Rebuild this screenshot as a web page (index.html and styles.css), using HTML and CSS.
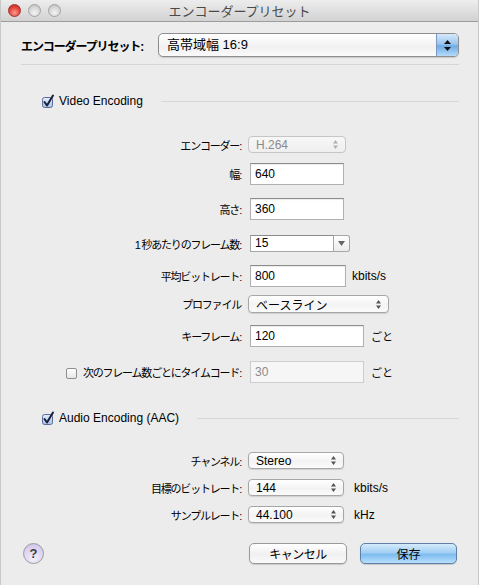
FILE: index.html
```html
<!DOCTYPE html>
<html lang="ja">
<head>
<meta charset="utf-8">
<title>エンコーダープリセット</title>
<link rel="stylesheet" href="styles.css">
</head>
<body>
<div class="window">
  <div class="titlebar">
    <div class="lights">
      <span class="light red"></span>
      <span class="light"></span>
      <span class="light"></span>
    </div>
    <div class="title">エンコーダープリセット</div>
    <div></div>
  </div>

  <div class="content">
    <div class="preset-row">
      <span class="preset-label">エンコーダープリセット:</span>
      <div class="preset-popup">
        <span class="preset-value">高帯域幅 16:9</span>
        <span class="preset-arrows">
          <svg width="7" height="11" viewBox="0 0 7 11"><path d="M0 4 L3.5 0 L7 4Z M0 7 L3.5 11 L7 7Z" fill="#111"/></svg>
        </span>
      </div>
    </div>
    <div class="sep"></div>

    <div class="section-head video-head">
      <svg class="check" width="14" height="14" viewBox="0 0 14 14">
        <defs><linearGradient id="cb1" x1="0" y1="0" x2="0" y2="1"><stop offset="0" stop-color="#e6eefb"/><stop offset="1" stop-color="#a9bfe6"/></linearGradient></defs>
        <rect x="1.5" y="3.5" width="10" height="10" rx="2" fill="url(#cb1)" stroke="#5a6c98"/>
        <path d="M3.5 8 L6 11.5 L12 1.5" fill="none" stroke="#18203c" stroke-width="2" stroke-linecap="round" stroke-linejoin="round"/>
      </svg>
      <span class="head-text">Video Encoding</span>
      <span class="head-line"></span>
    </div>

    <div class="row r-encoder">
      <span class="label">エンコーダー:</span>
      <div class="popup popup-encoder disabled">
        <span>H.264</span>
        <svg width="5" height="9" viewBox="0 0 5 9"><path d="M0 3.5 L2.5 0 L5 3.5Z M0 5.5 L2.5 9 L5 5.5Z" fill="#b0b0b0"/></svg>
      </div>
    </div>

    <div class="row r-width">
      <span class="label">幅:</span>
      <div class="field field-s">640</div>
    </div>

    <div class="row r-height">
      <span class="label">高さ:</span>
      <div class="field field-s">360</div>
    </div>

    <div class="row r-frame">
      <span class="label">1 秒あたりのフレーム数:</span>
      <div class="combo">
        <div class="combo-field">15</div>
        <div class="combo-btn">
          <svg width="7" height="5" viewBox="0 0 7 5"><path d="M0 0 L7 0 L3.5 5Z" fill="#666"/></svg>
        </div>
      </div>
    </div>

    <div class="row r-bitrate">
      <span class="label">平均ビットレート:</span>
      <div class="field field-m">800</div>
      <span class="unit unit-near">kbits/s</span>
    </div>

    <div class="row r-profile">
      <span class="label">プロファイル</span>
      <div class="popup popup-profile">
        <span>ベースライン</span>
        <svg width="5" height="9" viewBox="0 0 5 9"><path d="M0 3.5 L2.5 0 L5 3.5Z M0 5.5 L2.5 9 L5 5.5Z" fill="#555"/></svg>
      </div>
    </div>

    <div class="row r-key">
      <span class="label">キーフレーム:</span>
      <div class="field field-l">120</div>
      <span class="unit unit-goto">ごと</span>
    </div>

    <div class="row r-timecode">
      <span class="label">
        <span class="box"></span>次のフレーム数ごとにタイムコード:
      </span>
      <div class="field field-l disabled">30</div>
      <span class="unit unit-goto">ごと</span>
    </div>

    <div class="section-head audio-head">
      <svg class="check" width="14" height="14" viewBox="0 0 14 14">
        <defs><linearGradient id="cb2" x1="0" y1="0" x2="0" y2="1"><stop offset="0" stop-color="#e6eefb"/><stop offset="1" stop-color="#a9bfe6"/></linearGradient></defs>
        <rect x="1.5" y="3.5" width="10" height="10" rx="2" fill="url(#cb2)" stroke="#5a6c98"/>
        <path d="M3.5 8 L6 11.5 L12 1.5" fill="none" stroke="#18203c" stroke-width="2" stroke-linecap="round" stroke-linejoin="round"/>
      </svg>
      <span class="head-text">Audio Encoding (AAC)</span>
      <span class="head-line"></span>
    </div>

    <div class="row r-channel">
      <span class="label">チャンネル:</span>
      <div class="popup popup-audio">
        <span>Stereo</span>
        <svg width="5" height="9" viewBox="0 0 5 9"><path d="M0 3.5 L2.5 0 L5 3.5Z M0 5.5 L2.5 9 L5 5.5Z" fill="#555"/></svg>
      </div>
    </div>

    <div class="row r-abitrate">
      <span class="label">目標のビットレート:</span>
      <div class="popup popup-audio">
        <span>144</span>
        <svg width="5" height="9" viewBox="0 0 5 9"><path d="M0 3.5 L2.5 0 L5 3.5Z M0 5.5 L2.5 9 L5 5.5Z" fill="#555"/></svg>
      </div>
      <span class="unit unit-audio">kbits/s</span>
    </div>

    <div class="row r-sample">
      <span class="label">サンプルレート:</span>
      <div class="popup popup-audio">
        <span>44.100</span>
        <svg width="5" height="9" viewBox="0 0 5 9"><path d="M0 3.5 L2.5 0 L5 3.5Z M0 5.5 L2.5 9 L5 5.5Z" fill="#555"/></svg>
      </div>
      <span class="unit unit-audio">kHz</span>
    </div>

    <div class="footer">
      <div class="help">?</div>
      <div class="btn btn-cancel">キャンセル</div>
      <div class="btn btn-save">保存</div>
    </div>
  </div>
</div>
</body>
</html>
```

FILE: styles.css
```css
* { box-sizing: border-box; }
html, body { margin: 0; padding: 0; }
body {
  width: 479px;
  height: 585px;
  overflow: hidden;
  background: #ececec;
  font-family: "Liberation Sans", "Noto Sans CJK JP", sans-serif;
  color: #000;
}
.window {
  height: 585px;
  background: #ececec;
  border-left: 1px solid #c9c9c9;
  border-right: 1px solid #c9c9c9;
}

/* title bar */
.titlebar {
  height: 22px;
  display: grid;
  grid-template-columns: 1fr auto 1fr;
  align-items: center;
  background: linear-gradient(#ededed, #d2d2d2);
  border-bottom: 1px solid #9c9c9c;
}
.lights { display: flex; gap: 7px; padding-left: 7px; }
.light {
  width: 13px; height: 13px; border-radius: 50%;
  background: radial-gradient(circle at 50% 70%, #f4f4f4 0%, #d6d6d6 55%, #b8b8b8 100%);
  border: 1px solid #a4a4a4;
}
.light.red {
  background: radial-gradient(circle at 50% 70%, #ff9a8e 0%, #e2463d 55%, #b8241d 100%);
  border-color: #a0302a;
}
.title {
  font-size: 13px;
  color: #4a4a4a;
  letter-spacing: 0;
}

/* content */
.content { padding: 11px 19px 0 20px; }

.preset-row { display: flex; align-items: center; height: 24px; }
.preset-label {
  width: 137px;
  font-size: 12px;
  font-weight: bold;
  letter-spacing: -1.1px;
}
.preset-popup {
  flex: 1;
  height: 24px;
  display: flex;
  border: 1px solid #8e8e8e;
  border-radius: 5px;
  background: linear-gradient(#ffffff, #f1f1f1 60%, #fafafa);
  box-shadow: 0 1px 1px rgba(0,0,0,0.15);
  overflow: hidden;
}
.preset-value {
  flex: 1;
  padding-left: 8px;
  font-size: 13px;
  line-height: 22px;
}
.preset-arrows {
  width: 22px;
  display: flex;
  align-items: center;
  justify-content: center;
  border-left: 1px solid #7a98c4;
  background: linear-gradient(#d6e8fb, #9cc6ef 45%, #6eabe6 55%, #b6dbfa);
}

.sep { height: 1px; background: #d6d6d6; margin-top: 7px; }

.section-head { display: flex; align-items: center; height: 16px; }
.video-head { margin-top: 28px; }
.audio-head { margin-top: 27px; }
.check { margin-left: 20px; flex: none; }
.head-text { font-size: 12px; margin-left: 4px; }
.head-line { flex: 1; height: 1px; background: #d6d6d6; margin-left: 18px; }

/* rows */
.row { display: flex; align-items: center; }
.label {
  width: 220px;
  flex: none;
  text-align: right;
  font-size: 11px;
  letter-spacing: -1.2px;
  white-space: nowrap;
}
.r-encoder { margin-top: 27px; }
.r-width { margin-top: 10px; }
.r-height { margin-top: 13px; }
.r-frame { margin-top: 15px; }
.r-bitrate { margin-top: 13px; }
.r-profile { margin-top: 8px; }
.r-key { margin-top: 12px; }
.r-timecode { margin-top: 14px; }
.r-channel { margin-top: 26px; }
.r-abitrate { margin-top: 10px; }
.r-sample { margin-top: 10px; }

.field {
  margin-left: 9px;
  height: 22px;
  background: #fff;
  border: 1px solid #b0b0b0;
  border-top-color: #8c8c8c;
  box-shadow: inset 0 1px 1px rgba(0,0,0,0.08);
  font-size: 12px;
  line-height: 20px;
  padding-left: 4px;
}
.field-s { width: 94px; }
.field-m { width: 96px; }
.field-l { width: 114px; }
.field.disabled {
  background: #f6f6f6;
  border-color: #cdcdcd;
  color: #8a8a8a;
  box-shadow: none;
}

.popup {
  margin-left: 7px;
  height: 17px;
  display: flex;
  align-items: center;
  justify-content: space-between;
  padding: 0 7px 0 7px;
  border: 1px solid #a6a6a6;
  border-radius: 4px;
  background: linear-gradient(#ffffff, #f3f3f3 55%, #fbfbfb);
  box-shadow: 0 1px 1px rgba(0,0,0,0.12);
  font-size: 12px;
}
.popup-encoder { width: 98px; }
.popup-profile { width: 141px; height: 18px; }
.popup-audio { width: 96px; }
.popup.disabled {
  border-color: #c6c6c6;
  color: #8a8a8a;
  box-shadow: none;
  background: linear-gradient(#f7f7f7, #efefef);
}

.combo { margin-left: 9px; display: flex; height: 17px; }
.combo-field {
  width: 84px;
  background: #fff;
  border: 1px solid #a6a6a6;
  border-top-color: #8c8c8c;
  font-size: 12px;
  line-height: 15px;
  padding-left: 4px;
}
.combo-btn {
  width: 16px;
  display: flex;
  align-items: center;
  justify-content: center;
  border: 1px solid #a6a6a6;
  border-left: none;
  border-radius: 0 3px 3px 0;
  background: linear-gradient(#ffffff, #ececec);
}

.unit { font-size: 12px; }
.unit-near { margin-left: 6px; }
.unit-goto { margin-left: 7px; font-size: 11px; }
.unit-audio { margin-left: 10px; }

.box {
  display: inline-block;
  width: 11px;
  height: 11px;
  vertical-align: -2px;
  margin-right: 6px;
  border: 1px solid #8e8e8e;
  border-radius: 2px;
  background: linear-gradient(#ffffff, #e8e8e8);
}

/* footer */
.footer { display: flex; align-items: center; margin-top: 20px; height: 21px; }
.help {
  margin-left: 2px;
  width: 21px;
  height: 21px;
  border-radius: 50%;
  border: 1px solid #9a9a9a;
  background: radial-gradient(circle at 50% 75%, #f4f0fb 0%, #dcd2f0 60%, #c9bce6 100%);
  display: flex;
  align-items: center;
  justify-content: center;
  font-size: 13px;
  font-weight: bold;
  color: #3d3d3d;
}
.btn {
  height: 21px;
  border-radius: 5px;
  display: flex;
  align-items: center;
  justify-content: center;
  font-size: 12px;
  box-shadow: 0 1px 1px rgba(0,0,0,0.15);
}
.btn-cancel {
  margin-left: auto;
  width: 98px;
  border: 1px solid #999;
  background: linear-gradient(#ffffff, #f0f0f0 55%, #fafafa);
  letter-spacing: -0.5px;
}
.btn-save {
  margin-left: 13px;
  margin-right: 2px;
  width: 97px;
  border: 1px solid #5d7fa8;
  background: linear-gradient(#d5ebfc, #a2cff3 45%, #7dbcef 55%, #b8e0fc);
}
```
